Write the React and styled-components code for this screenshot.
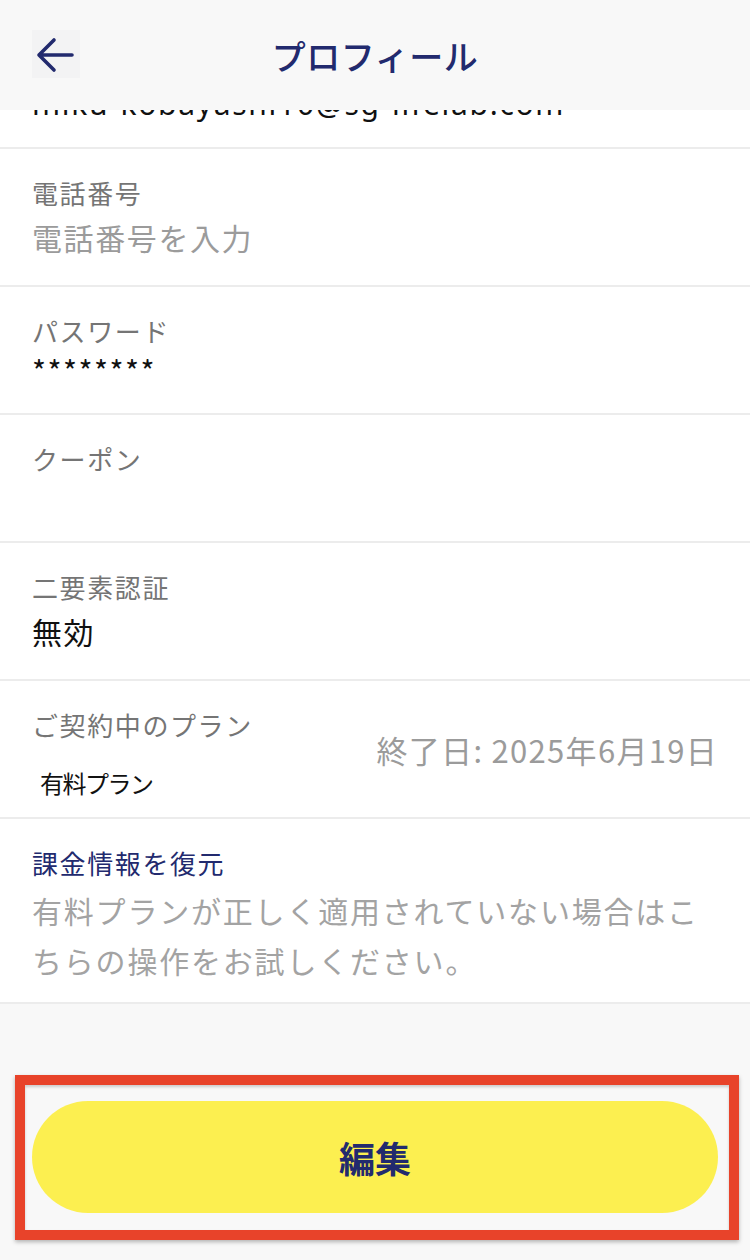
import React from "react";
import styled, { createGlobalStyle } from "styled-components";

const navy = "#222a6e";

const GlobalStyle = createGlobalStyle`
  html, body {
    margin: 0;
    padding: 0;
    background: #f8f8f8;
  }
  body {
    font-family: "Noto Sans CJK JP", "Noto Sans", sans-serif;
  }
`;

const Screen = styled.div`
  width: 750px;
  height: 1260px;
  overflow: hidden;
  background: #f8f8f8;
`;

const Header = styled.header`
  position: relative;
  z-index: 2;
  height: 110px;
  background: #f8f8f8;
  display: grid;
  grid-template-columns: 80px 1fr 80px;
  align-items: center;
`;

const BackButton = styled.button`
  width: 48px;
  height: 48px;
  margin-left: 32px;
  margin-top: -2px;
  padding: 0;
  border: none;
  background: #f3f3f4;
  display: flex;
  align-items: center;
  justify-content: center;
`;

const Title = styled.h1`
  margin: 0;
  text-align: center;
  font-size: 34px;
  font-weight: 500;
  color: ${navy};
  letter-spacing: 0.5px;
`;

// list is scrolled so its first row sits partly under the header
const List = styled.div`
  position: relative;
  z-index: 1;
  margin-top: -99px;
  background: #fff;
`;

const Row = styled.div`
  display: flex;
  align-items: center;
  justify-content: space-between;
  padding: ${(p) => p.$top || 26}px 32px ${(p) => p.$bottom || 26}px;
  border-bottom: 2px solid #ececec;
`;

const Field = styled.div`
  display: flex;
  flex-direction: column;
  gap: 4px;
`;

const Label = styled.div`
  font-size: 26px;
  line-height: 36px;
  letter-spacing: 1.6px;
  color: ${(p) => (p.$link ? navy : "#757575")};
`;

const Value = styled.div`
  font-family: ${(p) => (p.$latin ? '"Noto Sans", sans-serif' : "inherit")};
  font-size: ${(p) => p.$size || 30}px;
  line-height: ${(p) => p.$lh || 44}px;
  min-height: ${(p) => p.$lh || 44}px;
  color: ${(p) => (p.$muted ? "#9b9b9b" : "#111")};
  letter-spacing: ${(p) => (p.$spacing !== undefined ? p.$spacing : 1.6)}px;
  margin-top: ${(p) => p.$top || 0}px;
  padding-left: ${(p) => p.$indent || 0}px;
`;

const EndDate = styled.div`
  font-size: 31px;
  line-height: 44px;
  letter-spacing: 1.3px;
  color: #9b9b9b;
  margin-bottom: 10px;
`;

const Note = styled.div`
  font-size: 30px;
  line-height: 50px;
  letter-spacing: 1.8px;
  color: #a3a3a3;
`;

const Footer = styled.div`
  padding: 71px 11px 0 15px;
`;

const Highlight = styled.div`
  border: 10px solid #e8432a;
  padding: 16px 11px 17px 7px;
  box-shadow: 0 2px 4px rgba(0, 0, 0, 0.28), inset 0 2px 3px rgba(0, 0, 0, 0.18);
  background: #f8f8f8;
`;

const EditButton = styled.button`
  width: 100%;
  height: 112px;
  border: none;
  border-radius: 56px;
  background: #fcef50;
  color: ${navy};
  font-family: "Noto Sans CJK JP", sans-serif;
  font-size: 36px;
  font-weight: 700;
  display: flex;
  align-items: center;
  justify-content: center;
`;

const BackArrow = () => (
  <svg width="48" height="48" viewBox="0 0 48 48" fill="none">
    <path
      d="M22 10 L7 25 L22 40 M7 25 H40"
      stroke={navy}
      strokeWidth="3.6"
      strokeLinecap="round"
      strokeLinejoin="round"
    />
  </svg>
);

export default function App() {
  return (
    <Screen>
      <GlobalStyle />
      <Header>
        <BackButton aria-label="戻る">
          <BackArrow />
        </BackButton>
        <Title>プロフィール</Title>
        <div />
      </Header>
      <List>
        <Row $top={31} $bottom={21}>
          <Field>
            <Label>メールアドレス</Label>
            <Value $latin $spacing={1.7}>miku-kobayashi10@sg-lifelab.com</Value>
          </Field>
        </Row>
        <Row>
          <Field>
            <Label>電話番号</Label>
            <Value $muted>電話番号を入力</Value>
          </Field>
        </Row>
        <Row>
          <Field>
            <Label>パスワード</Label>
            <Value $size={30} $lh={34} $spacing={1.5}>********</Value>
          </Field>
        </Row>
        <Row>
          <Field>
            <Label>クーポン</Label>
            <Value $lh={34}></Value>
          </Field>
        </Row>
        <Row>
          <Field>
            <Label>二要素認証</Label>
            <Value>無効</Value>
          </Field>
        </Row>
        <Row $bottom={14}>
          <Field>
            <Label>ご契約中のプラン</Label>
            <Value $size={24} $lh={40} $top={16} $spacing={-1.5} $indent={8}>
              有料プラン
            </Value>
          </Field>
          <EndDate>終了日: 2025年6月19日</EndDate>
        </Row>
        <Row $bottom={17}>
          <Field>
            <Label $link>課金情報を復元</Label>
            <Note>
              有料プランが正しく適用されていない場合はこちらの操作をお試しください。
            </Note>
          </Field>
        </Row>
      </List>
      <Footer>
        <Highlight>
          <EditButton>編集</EditButton>
        </Highlight>
      </Footer>
    </Screen>
  );
}
